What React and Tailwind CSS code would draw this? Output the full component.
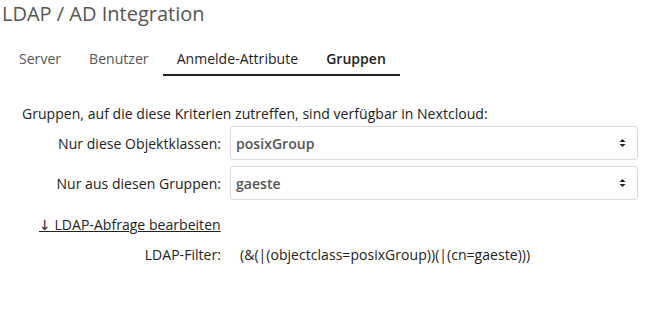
import React from 'react';

const font = { fontFamily: '"Open Sans", sans-serif' };

function Select({ value }) {
  return (
    <div className="relative w-[408px] h-[34px] border border-[#dbdbdb] rounded-[3px] bg-white flex items-center pl-[5px]">
      <span className="text-[14px] font-semibold text-[#555]">{value}</span>
      <svg className="absolute right-[11px] top-1/2 -translate-y-1/2" width="7" height="9" viewBox="0 0 7 9">
        <path d="M0.5 3.5 L3.5 0.5 L6.5 3.5 Z" fill="#222" />
        <path d="M0.5 5.5 L3.5 8.5 L6.5 5.5 Z" fill="#222" />
      </svg>
    </div>
  );
}

export default function App() {
  return (
    <div className="w-[653px] h-[330px] bg-white text-[#222] text-[14px] tracking-[0.04px]" style={font}>
      <h2 className="pl-[2px] pt-0 text-[20px] leading-[28px] text-[#555] tracking-normal">LDAP / AD Integration</h2>

      {/* Tabs */}
      <div className="flex pl-[5px] mt-[20px]">
        <div className="px-[14px] pb-[5px] text-[#555]">Server</div>
        <div className="px-[14px] pb-[5px] text-[#555]">Benutzer</div>
        <div className="px-[14px] pb-[5px] border-b-2 border-[#222] text-[#222]">Anmelde-Attribute</div>
        <div className="px-[14px] pb-[5px] border-b-2 border-[#222] font-semibold text-[#222]">Gruppen</div>
      </div>

      <div className="pl-[22px] mt-[27px]">Gruppen, auf die diese Kriterien zutreffen, sind verfügbar in Nextcloud:</div>

      <div className="grid grid-cols-[221px_auto] gap-x-[9px] gap-y-[6px] mt-[2px]">
        <div className="text-right self-center">Nur diese Objektklassen:</div>
        <Select value="posixGroup" />
        <div className="text-right self-center">Nur aus diesen Gruppen:</div>
        <Select value="gaeste" />
      </div>

      <div className="pl-[39px] mt-[14px]">
        <span className="underline">
          <span style={{ fontFamily: '"DejaVu Sans", sans-serif' }}>↓</span> LDAP-Abfrage bearbeiten
        </span>
      </div>

      <div className="flex mt-[8px]">
        <div className="w-[221px] text-right">LDAP-Filter:</div>
        <div className="pl-[19px]">(&amp;(|(objectclass=posixGroup))(|(cn=gaeste)))</div>
      </div>
    </div>
  );
}
